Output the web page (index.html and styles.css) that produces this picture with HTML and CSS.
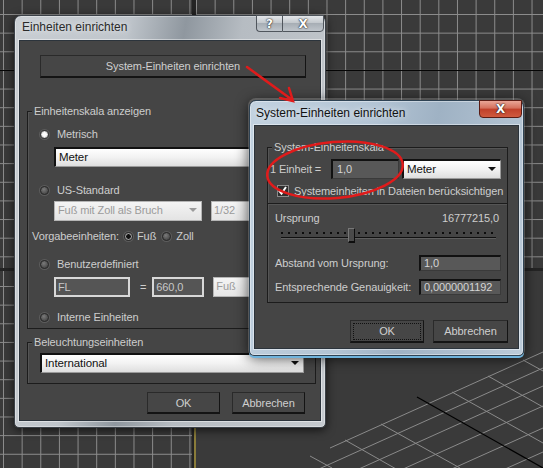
FILE: index.html
```html
<!DOCTYPE html>
<html lang="de">
<head>
<meta charset="UTF-8">
<meta name="viewport" content="width=device-width, initial-scale=1.0">
<title>Einheiten einrichten</title>
<link rel="stylesheet" href="styles.css">
</head>
<body>

<div class="desktop">
  <!-- 3D viewports behind the dialogs -->
  <div class="viewports">
    <div class="vp vp-top-left"></div>
    <div class="vp vp-top-right"></div>
    <div class="vp vp-bottom-left"></div>
    <div class="vp vp-persp">
      <svg class="persp-grid" viewBox="196 271 347 197" width="347" height="197">
        <g stroke="#8a8a8a" stroke-width="1" fill="none">
          <line x1="543" y1="352" x2="330" y2="448"/>
          <line x1="543" y1="368" x2="290" y2="482"/>
          <line x1="543" y1="386" x2="250" y2="518"/>
          <line x1="543" y1="406" x2="210" y2="556"/>
          <line x1="543" y1="428" x2="220" y2="573"/>
          <line x1="543" y1="452" x2="300" y2="561"/>
          <line x1="543" y1="478" x2="380" y2="551"/>
          <line x1="345" y1="440" x2="405" y2="474"/>
          <line x1="381" y1="424" x2="460" y2="468"/>
          <line x1="452" y1="392" x2="543" y2="443"/>
          <line x1="488" y1="376" x2="543" y2="407"/>
          <line x1="523" y1="360" x2="543" y2="371"/>
          <line x1="310" y1="456" x2="332" y2="468"/>
          <line x1="275" y1="472" x2="280" y2="475"/>
        </g>
        <line x1="417" y1="397" x2="543" y2="468" stroke="#000" stroke-width="1.2"/>
      </svg>
    </div>
  </div>

  <!-- Einheiten einrichten -->
  <div class="dialog units">
    <div class="titlebar">
      <span class="title">Einheiten einrichten</span>
      <div class="caption-buttons">
        <span class="cap-btn help">?</span>
        <span class="cap-btn close">X</span>
      </div>
    </div>
    <div class="client">
      <div class="btn big-btn">System-Einheiten einrichten</div>

      <div class="group scale-group">
        <span class="legend">Einheitenskala anzeigen</span>
        <div class="opt first"><span class="radio on"></span>Metrisch</div>
        <div class="dropdown meter-dd">Meter<span class="arrow"></span></div>
        <div class="opt us"><span class="radio"></span>US-Standard</div>
        <div class="field-row us-row">
          <div class="dropdown disabled foot-dd">Fuß mit Zoll als Bruch<span class="arrow"></span></div>
          <div class="edit light frac">1/32</div>
        </div>
        <div class="opt defaults">Vorgabeeinheiten:
          <span class="radio dot"></span>Fuß
          <span class="radio"></span>Zoll
        </div>
        <div class="opt custom"><span class="radio"></span>Benutzerdefiniert</div>
        <div class="field-row custom-row">
          <div class="edit dark-light fl">FL</div>
          <span class="eq">=</span>
          <div class="edit dark-light val">660,0</div>
          <div class="edit light unit">Fuß</div>
        </div>
        <div class="opt internal"><span class="radio"></span>Interne Einheiten</div>
      </div>

      <div class="group light-group">
        <span class="legend">Beleuchtungseinheiten</span>
        <div class="dropdown intl-dd">International<span class="arrow"></span></div>
      </div>

      <div class="button-row">
        <div class="btn">OK</div>
        <div class="btn">Abbrechen</div>
      </div>
    </div>
  </div>

  <!-- System-Einheiten einrichten -->
  <div class="dialog sysunits">
    <div class="titlebar">
      <span class="title">System-Einheiten einrichten</span>
      <div class="caption-buttons">
        <span class="cap-btn close red">X</span>
      </div>
    </div>
    <div class="client">
      <div class="group sys-group">
        <div class="sec-a">
          <span class="legend">System-Einheitenskala</span>
          <div class="unit-row">
            <span class="unit-label">1 Einheit =</span>
            <div class="edit dark one">1,0</div>
            <div class="dropdown sys-dd">Meter<span class="arrow"></span></div>
          </div>
          <div class="check-row"><span class="checkbox"><svg viewBox="0 0 11 11" width="11" height="11"><path d="M2 5.5 L4.5 8.5 L9 2" stroke="#fff" stroke-width="2" fill="none"/></svg></span>Systemeinheiten in Dateien berücksichtigen</div>
        </div>
        <div class="sec-b">
          <div class="origin-row"><span>Ursprung</span><span>16777215,0</span></div>
          <div class="slider"><span class="ticks"></span><span class="track"></span><span class="thumb"></span></div>
          <div class="value-row first"><span>Abstand vom Ursprung:</span><div class="edit dark num">1,0</div></div>
          <div class="value-row"><span>Entsprechende Genauigkeit:</span><div class="edit dark num">0,0000001192</div></div>
        </div>
      </div>
      <div class="button-row">
        <div class="btn focus">OK</div>
        <div class="btn">Abbrechen</div>
      </div>
    </div>
  </div>

  <!-- red annotation drawn over the screenshot -->
  <svg class="annot" viewBox="0 0 543 468" width="543" height="468">
    <g stroke="#e01b1b" fill="none" stroke-linecap="round">
      <path d="M247 67 L291 99" stroke-width="2.5"/>
      <path d="M280 98 L293 101 L289 88" stroke-width="2.5"/>
      <ellipse cx="335" cy="170" rx="68" ry="28" transform="rotate(-5 335 170)" stroke-width="2.5"/>
    </g>
  </svg>
</div>

</body>
</html>
```

FILE: styles.css
```css
  body {
    margin: 0;
    font-family: "Liberation Sans", Arial, sans-serif;
    font-size: 11px;
    letter-spacing: -0.1px;
    background: #383838;
  }
  .desktop {
    position: relative;
    width: 543px;
    height: 468px;
    overflow: hidden;
  }

  /* viewports */
  .viewports {
    display: grid;
    grid-template-columns: 192px 347px;
    grid-template-rows: 268px 197px;
    column-gap: 4px;
    row-gap: 3px;
    height: 468px;
    background: #242424;
  }
  .vp {
    background-color: #3a3a3a;
  }
  .vp-top-left,
  .vp-top-right,
  .vp-bottom-left {
    background-image:
      linear-gradient(to bottom, transparent 70px, #050505 70px, #050505 71px, transparent 71px),
      linear-gradient(to right, #8c8c8c 1px, transparent 1px),
      linear-gradient(to bottom, #8c8c8c 1px, transparent 1px);
    background-size: 100% 100%, 18.65px 18.65px, 18.65px 18.65px;
    background-repeat: no-repeat, repeat, repeat;
  }
  .vp-top-left {
    background-position: 0 0, 3px 14px, 3px 14px;
  }
  .vp-top-right {
    background-position: 0 0, 0 14px, 0 14px;
  }
  .vp-bottom-left {
    background-image:
      linear-gradient(to right, #8c8c8c 1px, transparent 1px),
      linear-gradient(to bottom, #8c8c8c 1px, transparent 1px);
    background-size: 18.65px 18.65px;
    background-repeat: repeat;
    background-position: 3px 15px;
  }
  .vp-persp {
    border-left: 2px solid #8a7c3a;
    margin-left: -2px;
  }
  .persp-grid {
    display: block;
  }

  /* dialog frames */
  .dialog {
    position: absolute;
    box-sizing: border-box;
    display: flex;
    flex-direction: column;
    padding: 0 4px 6px;
    border: 1px solid #3b4148;
    border-radius: 7px 7px 5px 5px;
    box-shadow: 0 0 0 1px rgba(255,255,255,.35) inset, 0 2px 10px rgba(0,0,0,.7);
  }
  .units {
    left: 14px;
    top: 15px;
    width: 312px;
    height: 413px;
    background: linear-gradient(100deg, #c9ced3 0%, #bfc5cb 30%, #8f979f 45%, #b6bcc2 60%, #c5cacf 100%);
  }
  .sysunits {
    left: 249px;
    top: 100px;
    width: 275px;
    height: 256px;
    background: linear-gradient(100deg, #c2d2e0 0%, #b3c4d4 40%, #9fb2c4 60%, #bccbd9 100%);
    border-color: #2f4354;
    box-shadow: 0 0 0 1px rgba(255,255,255,.4) inset, 0 -1px 0 1px rgba(255,255,255,.2), 0 2px 0 #6fb3dc, 0 2px 14px rgba(0,0,0,.75);
  }
  .titlebar {
    display: flex;
    justify-content: space-between;
    align-items: flex-start;
    height: 24px;
    flex: none;
  }
  .title {
    font-size: 12px;
    letter-spacing: 0;
    color: #2a2a2a;
    margin: 4px 0 0 3px;
    text-shadow: 0 0 6px rgba(255,255,255,.9);
  }
  .sysunits .title {
    margin: 5px 0 0 2px;
    color: #111;
  }
  .caption-buttons {
    display: flex;
    margin-top: -1px;
    margin-right: -3px;
  }
  .cap-btn {
    display: flex;
    align-items: center;
    justify-content: center;
    height: 17px;
    border: 1px solid #50565d;
    background: linear-gradient(#e4e7ea, #c3c8cd 45%, #a7aeb5 50%, #bfc5cb);
    color: #fff;
    font: bold 12px "DejaVu Sans", sans-serif;
    text-shadow: 0 0 2px #222, 0 0 1px #000;
    box-sizing: border-box;
  }
  .cap-btn.help {
    width: 26px;
    border-radius: 0 0 0 4px;
    border-right: none;
  }
  .cap-btn.close {
    width: 42px;
    border-radius: 0 0 4px 0;
  }
  .cap-btn.red {
    width: 43px;
    height: 18px;
    border-radius: 0 0 4px 4px;
    border-color: #5a1c14;
    background: linear-gradient(#e9a697, #d4705c 45%, #c0402a 50%, #cf5a3f);
  }

  /* client area */
  .client {
    flex: 1;
    box-sizing: border-box;
    background: #454545;
    border: 1px solid #2c343c;
    box-shadow: 0 0 0 1px rgba(255,255,255,.45);
    color: #cdcdcd;
    display: flex;
    flex-direction: column;
    white-space: nowrap;
  }
  .units .client {
    padding: 14px 4px 0 7px;
  }
  .sysunits .client {
    padding: 21px 10px 0 12px;
  }

  .btn {
    box-sizing: border-box;
    height: 23px;
    display: flex;
    align-items: center;
    justify-content: center;
    background: #464646;
    border: 1px solid #2a2a2a;
    border-right-color: #141414;
    border-bottom: 2px solid #141414;
    color: #cfcfcf;
  }
  .big-btn {
    margin: 0 10px 0 13px;
  }
  .btn.focus {
    outline: 1px dotted #111;
    outline-offset: -4px;
  }

  .group {
    box-sizing: border-box;
    border: 1px solid #1c1c1c;
    box-shadow: 1px 1px 0 #555 inset;
    display: flex;
    flex-direction: column;
  }
  .legend {
    display: table;
    line-height: 14px;
    padding: 0 2px;
    background: #454545;
    margin: -8px 0 0 4px;
  }
  .scale-group {
    margin-top: 33px;
    height: 218px;
  }
  .light-group {
    margin-top: 13px;
    height: 42px;
  }

  .opt {
    display: flex;
    align-items: center;
    line-height: 14px;
    height: 14px;
    margin-left: 12px;
  }
  .opt.first { margin-top: 9px; }
  .opt.us { margin-top: 16px; }
  .opt.defaults { margin: 8px 0 0 4px; }
  .opt.custom { margin-top: 14px; }
  .opt.internal { margin-top: 13px; }

  .radio {
    width: 9px;
    height: 9px;
    border-radius: 50%;
    margin-right: 8px;
    box-sizing: border-box;
    border: 1px solid #2a2a2a;
    background: radial-gradient(circle at 40% 35%, #7a7a7a, #4c4c4c 70%);
    box-shadow: 0 0 0 1px #5c5c5c;
  }
  .radio.on {
    background: radial-gradient(circle, #fff 0 2px, #dcdcdc 2.5px, #bdbdbd 100%);
    border-color: #3a3a3a;
  }
  .radio.dot {
    background: radial-gradient(circle, #111 0 2px, #8a8a8a 2.5px, #cfcfcf 100%);
    margin-left: 5px;
    margin-right: 4px;
  }
  .defaults .radio:last-child {
    margin-left: 6px;
    margin-right: 5px;
  }

  .dropdown {
    position: relative;
    box-sizing: border-box;
    height: 20px;
    line-height: 16px;
    padding-left: 3px;
    color: #111;
    background: linear-gradient(#ffffff, #f2f2f2 50%, #dedede);
    border: 1px solid #9a9a9a;
    border-top: 2px solid #111;
    border-left: 2px solid #111;
    font-size: 11.5px;
  }
  .arrow {
    position: absolute;
    right: 4px;
    top: 6px;
    border-left: 4px solid transparent;
    border-right: 4px solid transparent;
    border-top: 4px solid #111;
  }
  .meter-dd {
    margin: 6px 0 0 26px;
    width: 250px;
  }
  .field-row {
    display: flex;
    align-items: center;
    margin-left: 26px;
    height: 20px;
  }
  .us-row { margin-top: 4px; }
  .custom-row { margin-top: 6px; }
  .dropdown.disabled {
    color: #9b9b9b;
    background: linear-gradient(#f4f4f4, #e4e4e4);
    border: 1px solid #b5b5b5;
    font-size: 11px;
  }
  .dropdown.disabled .arrow {
    border-top-color: #9b9b9b;
  }
  .foot-dd {
    width: 148px;
  }
  .edit {
    box-sizing: border-box;
    height: 20px;
    line-height: 16px;
    padding-left: 2px;
  }
  .edit.light {
    color: #9b9b9b;
    background: linear-gradient(#f4f4f4, #e6e6e6);
    border: 1px solid #b5b5b5;
  }
  .frac {
    margin-left: 9px;
    width: 90px;
  }
  .edit.dark-light {
    background: #555;
    border: 2px solid #d8d8d8;
    color: #c8c8c8;
  }
  .fl { width: 76px; }
  .eq { margin: 0 6px 0 10px; }
  .val { width: 52px; }
  .unit { margin-left: 9px; width: 90px; }
  .intl-dd {
    margin: 4px 0 0 12px;
    width: 264px;
  }

  .button-row {
    display: flex;
    justify-content: flex-end;
    gap: 12px;
  }
  .units .button-row {
    margin: 8px 11px 0 0;
  }
  .units .button-row .btn {
    width: 73px;
    height: 22px;
  }

  /* system units dialog */
  .sys-group {
    height: 156px;
  }
  .sec-a {
    height: 55px;
    border-bottom: 1px solid #1c1c1c;
    box-shadow: 0 1px 0 #555;
  }
  .unit-row {
    display: flex;
    align-items: center;
    margin-top: 5px;
    padding-left: 2px;
    height: 20px;
  }
  .unit-label {
    width: 61px;
  }
  .edit.dark {
    background: #585858;
    border: 1px solid #3a3a3a;
    border-top: 2px solid #111;
    border-left: 2px solid #111;
    color: #d4d4d4;
  }
  .one {
    width: 68px;
    padding-left: 4px;
  }
  .sys-dd {
    margin-left: 3px;
    width: 99px;
  }
  .check-row {
    display: flex;
    align-items: center;
    height: 14px;
    margin: 5px 0 0 9px;
  }
  .checkbox {
    box-sizing: border-box;
    width: 12px;
    height: 12px;
    margin-right: 5px;
    background: #2e2e2e;
    border: 1px solid #8a8a8a;
    display: flex;
    flex: none;
  }
  .checkbox svg {
    margin: -1px 0 0 -1px;
  }
  .origin-row {
    display: flex;
    justify-content: space-between;
    line-height: 14px;
    margin: 7px 8px 0 7px;
  }
  .slider {
    position: relative;
    height: 16px;
    margin: 3px 11px 0 13px;
  }
  .ticks {
    position: absolute;
    left: 0;
    right: 0;
    top: 4px;
    height: 2px;
    background: repeating-linear-gradient(to right, #0c0c0c 0 2px, transparent 2px 7px);
  }
  .track {
    position: absolute;
    left: 0;
    right: 0;
    top: 9px;
    height: 1px;
    background: #111;
    box-shadow: 0 1px 0 #5e5e5e;
  }
  .thumb {
    position: absolute;
    left: 67px;
    top: 0;
    width: 7px;
    height: 15px;
    box-sizing: border-box;
    background: #4a4a4a;
    border: 1px solid #777;
    border-right-color: #0e0e0e;
    border-bottom: 2px solid #0e0e0e;
  }
  .value-row {
    display: flex;
    justify-content: space-between;
    align-items: center;
    margin: 8px 6px 0 7px;
    height: 16px;
  }
  .value-row.first {
    margin-top: 11px;
  }
  .num {
    width: 82px;
    height: 16px;
    line-height: 12px;
    padding-left: 3px;
  }
  .sysunits .button-row {
    margin-top: 17px;
    gap: 9px;
  }
  .sysunits .button-row .btn {
    width: 74px;
  }
  .sysunits .button-row .btn + .btn {
    width: 75px;
  }

  .annot {
    position: absolute;
    left: 0;
    top: 0;
    pointer-events: none;
  }
```
